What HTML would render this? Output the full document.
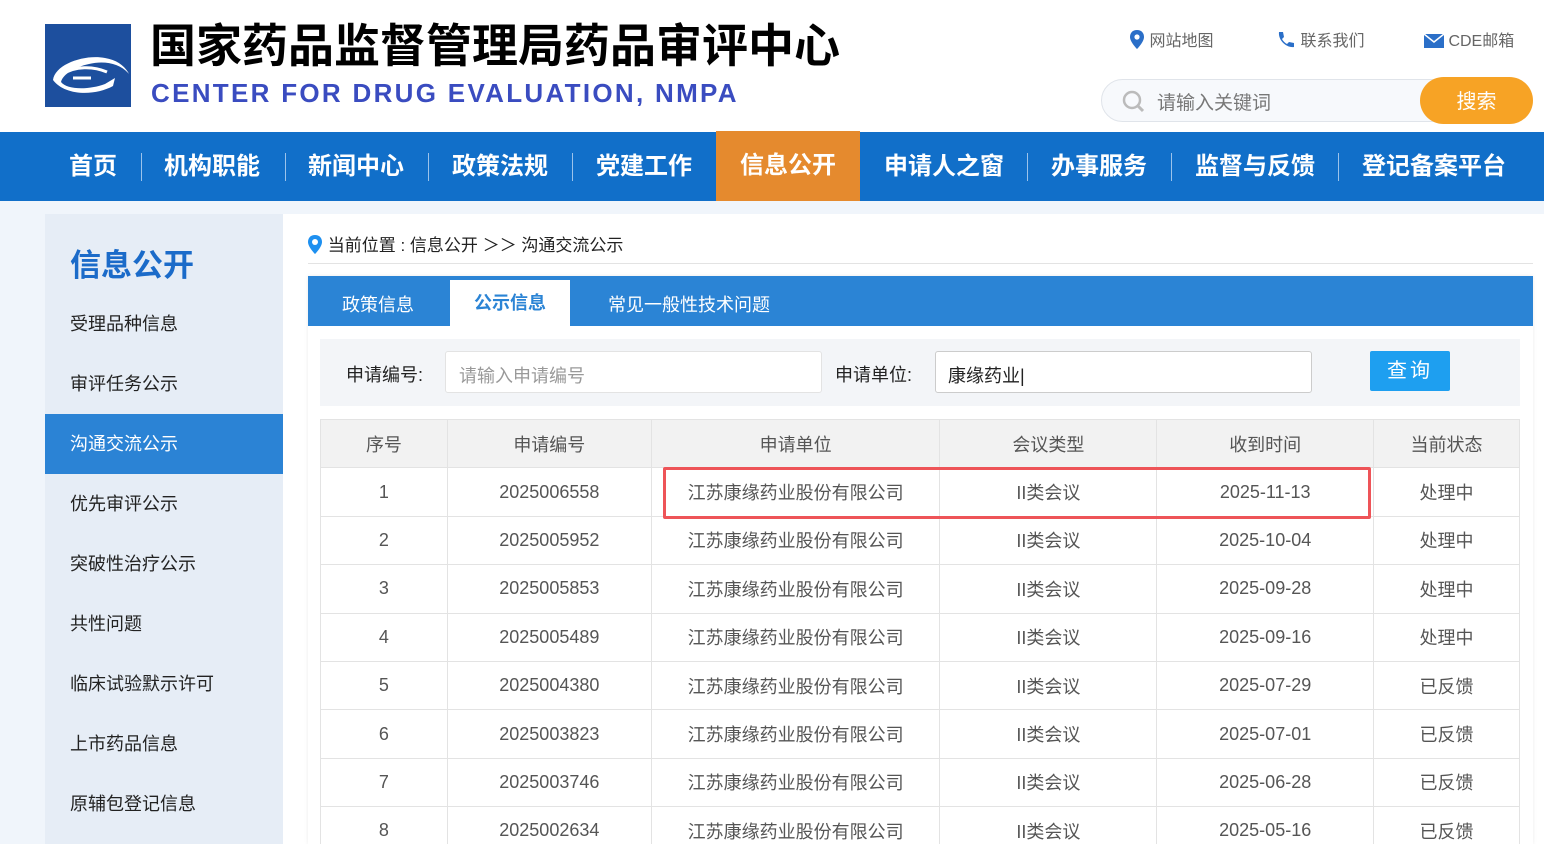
<!DOCTYPE html>
<html><head><meta charset="utf-8"><style>
*{margin:0;padding:0;box-sizing:border-box}
html,body{width:1544px;height:844px;overflow:hidden}
body{background:#f0f5fb;font-family:"Liberation Sans","Noto Sans CJK SC",sans-serif;position:relative}
.abs{position:absolute}
#hdr{left:0;top:0;width:1544px;height:132px;background:#fff}
#logo{left:45px;top:24px;width:86px;height:83px;background:#1d4f9e}
#title{left:150px;top:20px;font-size:46px;font-weight:bold;color:#000;letter-spacing:0;white-space:nowrap;line-height:52px}
#eng{left:151px;top:78px;font-size:26px;font-weight:bold;color:#3a4cc0;letter-spacing:2.3px;white-space:nowrap;line-height:30px}
.top{top:27px;font-size:16px;color:#666;white-space:nowrap}
#search{left:1101px;top:79px;width:430px;height:43px;border:1px solid #e0e4ea;border-radius:22px;background:#f7f9fc}
#sbtn{left:1420px;top:77px;width:113px;height:47px;border-radius:24px;background:#f7a325;color:#fff;font-size:20px;text-align:center;line-height:50px}
#nav{left:0;top:132px;width:1544px;height:69px;background:#116fc9}
.ni{position:absolute;top:0;height:69px;line-height:69px;color:#fff;font-size:24px;font-weight:bold;white-space:nowrap}
.sep{position:absolute;top:21px;width:1px;height:28px;background:#9cc3eb}
#side{left:45px;top:214px;width:238px;height:630px;background:#e6edf6}
.si{position:absolute;left:0;width:238px;height:60px;line-height:60px;padding-left:25px;font-size:18px;color:#222}
#main{left:283px;top:214px;width:1261px;height:630px;background:#fff}
#panel{left:308px;top:276px;width:1225px;height:568px;background:#fff;box-shadow:0 0 4px rgba(0,0,0,.08)}
table{position:absolute;left:320px;top:419px;border-collapse:collapse;width:1200px}
td,th{border:1px solid #e3e3e3;text-align:center;font-size:18px;color:#555;font-weight:normal;height:48.4px;padding:0}
th{background:#f2f2f2}
</style></head><body>
<div id="hdr" class="abs"></div>
<div id="logo" class="abs"><svg width="86" height="83" viewBox="0 0 86 83"><path d="M8 56 C10 40 40 30 60 34 C72 36 80 42 84 50 C76 40 60 36 44 40 C30 43 18 50 16 58 C22 66 44 66 60 60 L70 54 L68 62 C50 72 20 72 8 56Z" fill="#fff"/><path d="M18 50 C30 42 48 42 62 48" stroke="#fff" stroke-width="3" fill="none"/><path d="M28 54 L46 54" stroke="#fff" stroke-width="3"/></svg></div>
<div id="title" class="abs">国家药品监督管理局药品审评中心</div>
<div id="eng" class="abs">CENTER FOR DRUG EVALUATION, NMPA</div>
<div class="abs top" style="left:1129px"><svg width="16" height="20" viewBox="0 0 16 20" style="vertical-align:-4px"><path d="M8 0C3.6 0 1 3 1 7c0 5 7 12 7 12s7-7 7-12c0-4-2.6-7-7-7z" fill="#2b6fc8"/><circle cx="8" cy="7" r="2.6" fill="#fff"/></svg> 网站地图</div>
<div class="abs top" style="left:1276px"><svg width="20" height="20" viewBox="0 0 20 20" style="vertical-align:-4px"><path d="M3 2l4 0 1 5-2 2c1 2 3 4 5 5l2-2 5 1v4c-8 1-16-7-15-15z" fill="#2b6fc8"/></svg> 联系我们</div>
<div class="abs top" style="left:1424px"><svg width="20" height="14" viewBox="0 0 20 14" style="vertical-align:-2px"><rect width="20" height="14" fill="#2b6fc8"/><path d="M0 0l10 8 10-8" stroke="#fff" stroke-width="1.5" fill="none"/></svg> CDE邮箱</div>
<div id="search" class="abs"><svg class="abs" style="left:19px;top:9px" width="26" height="26" viewBox="0 0 26 26"><circle cx="11" cy="11" r="8" stroke="#bbb" stroke-width="2.5" fill="none"/><path d="M17 17l5 5" stroke="#bbb" stroke-width="3"/></svg><span class="abs" style="left:55px;top:8px;font-size:19px;color:#777">请输入关键词</span></div>
<div id="sbtn" class="abs">搜索</div>
<div id="nav" class="abs">
<div class="ni" style="left:69px">首页</div><div class="sep" style="left:141px"></div>
<div class="ni" style="left:164px">机构职能</div><div class="sep" style="left:285px"></div>
<div class="ni" style="left:308px">新闻中心</div><div class="sep" style="left:428px"></div>
<div class="ni" style="left:452px">政策法规</div><div class="sep" style="left:572px"></div>
<div class="ni" style="left:596px">党建工作</div>
<div class="ni" style="left:716px;width:144px;top:-1px;height:70px;background:#e58a2e;text-align:center">信息公开</div>
<div class="ni" style="left:884px">申请人之窗</div><div class="sep" style="left:1027px"></div>
<div class="ni" style="left:1051px">办事服务</div><div class="sep" style="left:1171px"></div>
<div class="ni" style="left:1195px">监督与反馈</div><div class="sep" style="left:1338px"></div>
<div class="ni" style="left:1362px">登记备案平台</div>
</div>
<div id="side" class="abs">
<div class="abs" style="left:25px;top:26px;font-size:31px;font-weight:bold;color:#1b6bc9">信息公开</div>
<div class="si" style="top:80px">受理品种信息</div>
<div class="si" style="top:140px">审评任务公示</div>
<div class="si" style="top:200px;background:#2b83d5;color:#fff">沟通交流公示</div>
<div class="si" style="top:260px">优先审评公示</div>
<div class="si" style="top:320px">突破性治疗公示</div>
<div class="si" style="top:380px">共性问题</div>
<div class="si" style="top:440px">临床试验默示许可</div>
<div class="si" style="top:500px">上市药品信息</div>
<div class="si" style="top:560px">原辅包登记信息</div>
</div>
<div id="main" class="abs"></div>
<div class="abs" style="left:307px;top:231px;font-size:17px;color:#222;white-space:nowrap"><svg width="16" height="20" viewBox="0 0 16 20" style="vertical-align:-4px"><path d="M8 0C3.6 0 1 3 1 7c0 5 7 12 7 12s7-7 7-12c0-4-2.6-7-7-7z" fill="#1e90f0"/><circle cx="8" cy="7" r="3" fill="#fff"/></svg> 当前位置 : 信息公开 ＞＞ 沟通交流公示</div>
<div class="abs" style="left:308px;top:263px;width:1225px;height:1px;background:#e3e3e3"></div>
<div id="panel" class="abs"></div>
<div class="abs" style="left:308px;top:276px;width:1225px;height:50px;background:#2b84d5"></div>
<div class="abs" style="left:342px;top:291px;font-size:18px;color:#fff">政策信息</div>
<div class="abs" style="left:450px;top:280px;width:120px;height:46px;background:#fff;text-align:center;line-height:46px;font-size:18px;font-weight:bold;color:#2b84d5">公示信息</div>
<div class="abs" style="left:608px;top:291px;font-size:18px;color:#fff">常见一般性技术问题</div>
<div class="abs" style="left:320px;top:339px;width:1200px;height:67px;background:#f3f5f8"></div>
<div class="abs" style="left:346px;top:361px;font-size:18px;color:#222">申请编号:</div>
<div class="abs" style="left:445px;top:351px;width:377px;height:42px;background:#fff;border:1px solid #e3e3e3;border-radius:3px;padding:10px 13px;font-size:18px;color:#999">请输入申请编号</div>
<div class="abs" style="left:835px;top:361px;font-size:18px;color:#222">申请单位:</div>
<div class="abs" style="left:935px;top:351px;width:377px;height:42px;background:#fff;border:1px solid #ccc;border-radius:3px;padding:10px 12px;font-size:18px;color:#222">康缘药业|</div>
<div class="abs" style="left:1370px;top:351px;width:80px;height:40px;background:#1e9ff0;border-radius:2px;color:#fff;font-size:20px;text-align:center;line-height:40px;letter-spacing:3px">查询</div>
<table>
<colgroup><col style="width:127px"><col style="width:204px"><col style="width:289px"><col style="width:217px"><col style="width:217px"><col style="width:146px"></colgroup>
<tr><th>序号</th><th>申请编号</th><th>申请单位</th><th>会议类型</th><th>收到时间</th><th>当前状态</th></tr>
<tr><td>1</td><td>2025006558</td><td>江苏康缘药业股份有限公司</td><td>II类会议</td><td>2025-11-13</td><td>处理中</td></tr>
<tr><td>2</td><td>2025005952</td><td>江苏康缘药业股份有限公司</td><td>II类会议</td><td>2025-10-04</td><td>处理中</td></tr>
<tr><td>3</td><td>2025005853</td><td>江苏康缘药业股份有限公司</td><td>II类会议</td><td>2025-09-28</td><td>处理中</td></tr>
<tr><td>4</td><td>2025005489</td><td>江苏康缘药业股份有限公司</td><td>II类会议</td><td>2025-09-16</td><td>处理中</td></tr>
<tr><td>5</td><td>2025004380</td><td>江苏康缘药业股份有限公司</td><td>II类会议</td><td>2025-07-29</td><td>已反馈</td></tr>
<tr><td>6</td><td>2025003823</td><td>江苏康缘药业股份有限公司</td><td>II类会议</td><td>2025-07-01</td><td>已反馈</td></tr>
<tr><td>7</td><td>2025003746</td><td>江苏康缘药业股份有限公司</td><td>II类会议</td><td>2025-06-28</td><td>已反馈</td></tr>
<tr><td>8</td><td>2025002634</td><td>江苏康缘药业股份有限公司</td><td>II类会议</td><td>2025-05-16</td><td>已反馈</td></tr>
</table>
<div class="abs" style="left:663px;top:467px;width:708px;height:52px;border:3px solid #ee5458;border-radius:2px"></div>
</body></html>
